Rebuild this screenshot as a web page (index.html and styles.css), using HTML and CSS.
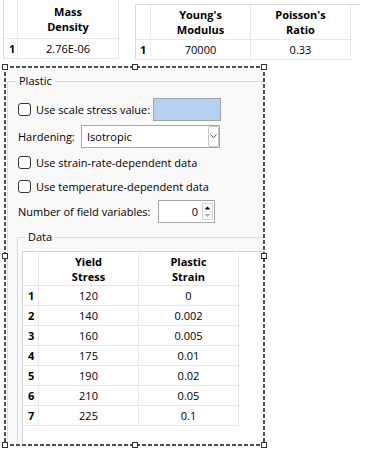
FILE: index.html
```html
<!DOCTYPE html>
<html>
<head>
<meta charset="utf-8">
<link rel="stylesheet" href="styles.css">
</head>
<body>
<div class="top">
  <div class="grid g1">
    <div class="rh"></div><div class="hd">Mass<br>Density</div>
    <div class="rh">1</div><div>2.76E-06</div>
  </div>
  <div class="grid g2">
    <div class="rh"></div><div class="hd">Young's<br>Modulus</div><div class="hd">Poisson's<br>Ratio</div>
    <div class="rh">1</div><div>70000</div><div>0.33</div>
  </div>
</div>
<div class="sel">
  <div class="clip">
    <fieldset class="gb plastic">
      <legend>Plastic</legend>
      <div class="rows">
        <div class="row r1">
          <label class="chk w1"><span class="box"></span>Use scale stress value:</label>
          <span class="blue"></span>
        </div>
        <div class="row r2">
          <span class="w2">Hardening:</span>
          <span class="combo"><span class="ctext">Isotropic</span><span class="cbtn"><svg width="7" height="5" viewBox="0 0 7 5"><polyline points="0.5,0.5 3.5,3.8 6.5,0.5" fill="none" stroke="#555" stroke-width="1"/></svg></span></span>
        </div>
        <div class="row r3">
          <label class="chk"><span class="box"></span>Use strain-rate-dependent data</label>
        </div>
        <div class="row r3">
          <label class="chk"><span class="box"></span>Use temperature-dependent data</label>
        </div>
        <div class="row r5">
          <span class="w5">Number of field variables:</span>
          <span class="spin"><span class="sval">0</span><span class="sbtn"><svg width="9" height="15" viewBox="0 0 9 15"><polygon points="1.5,5.5 4.5,2.5 7.5,5.5" fill="#111"/><line x1="0" y1="7.5" x2="9" y2="7.5" stroke="#e3e3e3" stroke-width="1"/><polygon points="1.5,10 4.5,13 7.5,10" fill="#aaa"/></svg></span></span>
        </div>
      </div>
      <fieldset class="gb data">
        <legend>Data</legend>
        <div class="grid g3">
          <div class="rh"></div><div class="hd">Yield<br>Stress</div><div class="hd">Plastic<br>Strain</div>
          <div class="rh">1</div><div>120</div><div>0</div>
          <div class="rh">2</div><div>140</div><div>0.002</div>
          <div class="rh">3</div><div>160</div><div>0.005</div>
          <div class="rh">4</div><div>175</div><div>0.01</div>
          <div class="rh">5</div><div>190</div><div>0.02</div>
          <div class="rh">6</div><div>210</div><div>0.05</div>
          <div class="rh">7</div><div>225</div><div>0.1</div>
        </div>
      </fieldset>
    </fieldset>
  </div>
  <span class="h hl ht"></span><span class="h hc ht"></span><span class="h hr ht"></span>
  <span class="h hl hm"></span><span class="h hr hm"></span>
  <span class="h hl hb"></span><span class="h hc hb"></span><span class="h hr hb"></span>
</div>
</body>
</html>
```
FILE: styles.css
```css
* { box-sizing: border-box; }
html, body { margin: 0; background: #fff; }
body {
  font-family: "Open Sans", "Noto Sans", sans-serif;
  font-size: 11px;
  color: #000;
  width: 369px;
  height: 449px;
  overflow: hidden;
}
.top { display: flex; align-items: flex-start; height: 66px; }
.grid { display: grid; background: #fff; align-content: start; }
.grid > div {
  border-right: 1px solid #e8e8e8;
  border-bottom: 1px solid #e8e8e8;
  display: flex;
  align-items: center;
  justify-content: center;
  text-align: center;
  line-height: 15px;
}
.grid > .hd { font-weight: bold; }
.grid > .rh { justify-content: flex-start; padding-left: 5px; font-weight: bold; }
.g1 {
  margin-left: 3px;
  border-left: 1px solid #d9d9d9;
  grid-template-columns: 14px 101px;
  grid-template-rows: 39px 20px;
}
.g2 {
  margin-left: 16px;
  margin-top: 4px;
  width: 224px;
  border-left: 1px solid #d9d9d9;
  border-top: 1px solid #d9d9d9;
  grid-template-columns: 15px 100px 100px;
  grid-template-rows: 35px 20px;
}
.g2 > .rh { padding-left: 4px; }

.sel { position: relative; margin-left: 4px; width: 261px; height: 380px; }
.sel::after {
  content: "";
  position: absolute;
  inset: 0;
  pointer-events: none;
  background:
    repeating-linear-gradient(to right, #505050 0 4px, transparent 4px 6px) 0 0 / 100% 2px no-repeat,
    repeating-linear-gradient(to right, #505050 0 4px, transparent 4px 6px) 0 100% / 100% 2px no-repeat,
    repeating-linear-gradient(to bottom, #505050 0 4px, transparent 4px 6px) 0 0 / 2px 100% no-repeat,
    repeating-linear-gradient(to bottom, #505050 0 4px, transparent 4px 6px) 100% 0 / 2px 100% no-repeat;
}
.clip { width: 100%; height: 100%; overflow: hidden; padding: 2px; background: #f9f9f9; }
.h {
  position: absolute;
  width: 6px;
  height: 6px;
  border: 1px solid #333;
  background: #fff;
  z-index: 2;
}
.hl { left: -2px; }
.hc { left: calc(50% - 3px); }
.hr { left: calc(100% - 4px); }
.ht { top: -2px; }
.hm { top: calc(50% - 3px); }
.hb { top: calc(100% - 4px); }

.gb { border: 1px solid #dcdcdc; margin: 0; min-width: 0; }
.gb > legend { padding: 0 3px; line-height: 16px; }
.plastic { margin: 5px 0 0 1px; padding: 9px 0 0 10px; width: 300px; height: 420px; }
.plastic > legend { margin-left: -2px; }
.rows { display: flex; flex-direction: column; gap: 4px; }
.row { display: flex; align-items: center; }
.r1, .r2, .r5 { height: 23px; }
.r3 { height: 20px; }
.chk { display: flex; align-items: center; }
.box {
  width: 13px;
  height: 13px;
  border: 1px solid #333;
  border-radius: 3px;
  background: #fff;
  margin-right: 5px;
  flex: none;
}
.w1 { width: 135px; }
.w2 { width: 63px; }
.w5 { width: 140px; }
.blue {
  width: 68px;
  height: 23px;
  background: #b4d2f0;
  border: 1px solid #a4a4a4;
}
.combo {
  width: 139px;
  height: 23px;
  border: 1px solid #a8a8a8;
  background: #fff;
  display: flex;
  align-items: center;
  padding-left: 5px;
}
.ctext { flex: 1; }
.cbtn {
  width: 11px;
  height: 21px;
  border: 1px solid #c4c4c4;
  border-radius: 2px;
  margin-right: 0;
  display: flex;
  align-items: center;
  justify-content: center;
}
.spin {
  width: 57px;
  height: 23px;
  border: 1px solid #a8a8a8;
  background: #fff;
  display: flex;
  align-items: center;
  justify-content: flex-end;
}
.sval { padding-right: 4px; }
.sbtn {
  width: 11px;
  height: 17px;
  border: 1px solid #d4d4d4;
  margin-right: 1px;
  display: flex;
  align-items: center;
  justify-content: center;
}
.data { margin: 6px 0 0 -1px; padding: 6px 0 0 4px; width: 290px; height: 300px; }
.data > legend { margin-left: 3px; }
.g3 {
  border-left: 1px solid #d5d5d5;
  border-top: 1px solid #d5d5d5;
  grid-template-columns: 16px 100px 100px;
  grid-template-rows: 34px repeat(7, 20px);
  width: 300px;
  height: 300px;
}
```
